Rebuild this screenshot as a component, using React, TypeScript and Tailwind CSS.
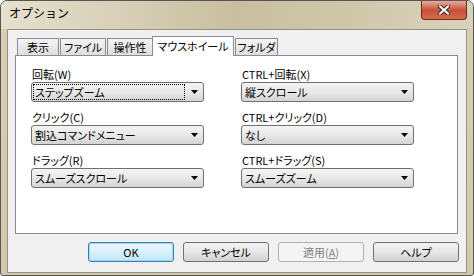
import React from 'react'

const font = "[font-family:'Noto_Sans_CJK_JP','Liberation_Sans',sans-serif]"

function Arrow() {
  return (
    <svg width="7" height="4" viewBox="0 0 7 4">
      <path d="M0 0h7L3.5 4z" fill="#000" />
    </svg>
  )
}

function Combo({ value, focused }: { value: string; focused?: boolean }) {
  return (
    <div className="flex h-[20px] items-stretch rounded-[3px] border border-[#707070] bg-gradient-to-b from-[#f4f4f4] via-[#e8e8e8] to-[#d4d4d4]">
      <div className="flex flex-1 p-px">
        <div
          className={`flex flex-1 items-center pl-px ${
            focused ? 'border border-dotted border-black' : 'border border-transparent'
          }`}
        >
          <span className="leading-none text-black">{value}</span>
        </div>
      </div>
      <div className="flex w-[17px] items-center justify-center pr-px">
        <Arrow />
      </div>
    </div>
  )
}

function Field({ label, value, focused }: { label: string; value: string; focused?: boolean }) {
  return (
    <div className="flex flex-col">
      <div className="flex h-[16px] items-center pl-px leading-none">{label}</div>
      <Combo value={value} focused={focused} />
    </div>
  )
}

const tabs = [
  { name: '表示', w: 'w-[42px]' },
  { name: 'ファイル', w: 'w-[46px]' },
  { name: '操作性', w: 'w-[46px]' },
  { name: 'マウスホイール', w: 'w-[82px]', active: true },
  { name: 'フォルダ', w: 'w-[43px]' },
]

function Button({ label, kind }: { label: React.ReactNode; kind?: 'default' | 'disabled' }) {
  let cls = 'border-[#707070] bg-gradient-to-b from-[#f3f3f3] via-[#e6e6e6] to-[#d2d2d2] text-black'
  if (kind === 'default')
    cls = 'border-[#3c7fb1] bg-gradient-to-b from-[#eaf6fd] via-[#d9f0fc] to-[#bee6fd] text-black shadow-[inset_0_0_0_1px_#9ddaf7]'
  if (kind === 'disabled') cls = 'border-[#adb2b5] bg-[#f4f4f4] text-[#838383]'
  return (
    <div className={`flex h-[20px] w-[86px] items-center justify-center rounded-[3px] border leading-none ${cls}`}>
      {label}
    </div>
  )
}

export default function App() {
  return (
    <div className={`${font} text-[11px] [font-feature-settings:'palt']`}>
      <div className="flex h-[276px] w-[474px] flex-col rounded-t-[7px] rounded-b-[3px] border border-[#565656] bg-gradient-to-b from-[#d8cfb6] to-[#d2c8ab] px-[6px] pb-[2px]">
        {/* title bar */}
        <div className="-mx-[6px] flex h-[28px] items-start justify-between rounded-t-[6px] bg-gradient-to-r from-[#e6e0cf] via-[#c9bf9f] to-[#d9d1b9] pl-[8px] pr-[6px]">
          <span className="mt-[6px] text-[12px] leading-none text-black [font-feature-settings:normal]">オプション</span>
          <div className="flex h-[19px] w-[46px] items-center justify-center rounded-b-[4px] border border-t-0 border-[#6d2b20] bg-gradient-to-b from-[#e9a99a] via-[#c7503a] to-[#d86b4c]">
            <svg width="12" height="10" viewBox="0 0 12 10">
              <path d="M2 1.5l8 7M10 1.5l-8 7" stroke="#3b2a28" strokeWidth="4" strokeLinecap="square" />
              <path d="M2 1.5l8 7M10 1.5l-8 7" stroke="#fff" strokeWidth="2" strokeLinecap="square" />
            </svg>
          </div>
        </div>

        {/* client area */}
        <div className="flex flex-1 flex-col border border-[#97917f] bg-[#f0f0f0]">
          <div className="flex h-[25px] items-end pl-[9px] pt-[6px]">
            {tabs.map((t) =>
              t.active ? (
                <div
                  key={t.name}
                  className={`relative z-10 -mb-px -ml-px flex h-[20px] ${t.w} items-start justify-center whitespace-nowrap border border-b-0 border-[#898c95] bg-white pt-[4px] leading-none`}
                >
                  {t.name}
                </div>
              ) : (
                <div
                  key={t.name}
                  className={`ml-px flex h-[17px] ${t.w} items-center justify-center whitespace-nowrap border border-b-0 border-[#898c95] bg-gradient-to-b from-[#f4f4f4] to-[#dedede] leading-none first:ml-0`}
                >
                  {t.name}
                </div>
              ),
            )}
          </div>

          <div className="ml-[7px] mr-[8px] h-[179px] border border-[#898c95] bg-white pl-[15px] pt-[10px]">
            <div className="grid grid-cols-[173px_173px] gap-x-[37px] gap-y-[7px]">
              <Field label="回転(W)" value="ステップズーム" focused />
              <Field label="CTRL+回転(X)" value="縦スクロール" />
              <Field label="クリック(C)" value="割込コマンドメニュー" />
              <Field label="CTRL+クリック(D)" value="なし" />
              <Field label="ドラッグ(R)" value="スムーズスクロール" />
              <Field label="CTRL+ドラッグ(S)" value="スムーズズーム" />
            </div>
          </div>

          <div className="mt-[8px] flex justify-end gap-[9px] pr-[7px]">
            <Button label="OK" kind="default" />
            <Button label="キャンセル" />
            <Button
              label={
                <span>
                  適用(<span className="underline">A</span>)
                </span>
              }
              kind="disabled"
            />
            <Button label="ヘルプ" />
          </div>
        </div>
      </div>
    </div>
  )
}
